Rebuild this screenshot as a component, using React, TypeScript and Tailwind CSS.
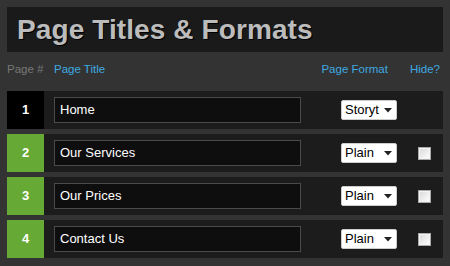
import React from 'react';

const rows = [
  { n: 1, title: 'Home', format: 'Storyt', hide: false, active: true },
  { n: 2, title: 'Our Services', format: 'Plain', hide: true, active: false },
  { n: 3, title: 'Our Prices', format: 'Plain', hide: true, active: false },
  { n: 4, title: 'Contact Us', format: 'Plain', hide: true, active: false },
];

const App = () => {
  return (
    <div
      className="w-[450px] h-[266px] bg-[#333333] px-[7px] pt-[7px] overflow-hidden"
      style={{ fontFamily: '"Liberation Sans", Arial, sans-serif' }}
    >
      {/* Title bar */}
      <div className="h-[45px] bg-[#1a1a1a] flex items-center pl-[10px]">
        <h1 className="text-[28px] font-bold text-[#bcbcbc] leading-none tracking-[0.1px] [text-shadow:1px_1px_0_#000]">
          Page Titles &amp; Formats
        </h1>
      </div>

      {/* Column headers */}
      <div className="h-[36px] flex items-center text-[11.5px]">
        <span className="w-[47px] text-[#777777]">Page #</span>
        <span className="text-[#3ea9e0]">Page Title</span>
        <span className="ml-auto text-[#3ea9e0]">Page Format</span>
        <span className="ml-[22px] mr-[3px] text-[#3ea9e0]">Hide?</span>
      </div>

      {/* Rows */}
      <div className="mt-[3px] flex flex-col gap-[5px]">
        {rows.map((r) => (
          <div key={r.n} className="h-[38px] bg-[#1c1c1c] flex items-center">
            <div
              className={`w-[37px] h-full flex items-center justify-center text-[13px] font-bold text-white ${
                r.active ? 'bg-black' : 'bg-[#67a935]'
              }`}
            >
              {r.n}
            </div>
            <div className="ml-[10px] w-[247px] h-[26px] bg-[#0e0e0e] border border-[#4a4a4a] flex items-center pl-[5px] text-[13px] text-white">
              {r.title}
            </div>
            <div className="ml-[40px] w-[56px] h-[20px] bg-white border border-[#cccccc] rounded-[2px] flex items-center pl-[3px] pr-[4px] text-[13px] text-black">
              <span className="flex-1 overflow-hidden whitespace-nowrap">{r.format}</span>
              <svg width="8" height="5" viewBox="0 0 8 5">
                <path d="M0 0 L8 0 L4 4.5 Z" fill="#222" />
              </svg>
            </div>
            {r.hide && (
              <div className="ml-[21px] w-[13px] h-[13px] border border-[#aaaaaa] bg-gradient-to-br from-[#d8d8d8] to-[#ffffff] shadow-[inset_0_0_0_1px_#f4f4f4]" />
            )}
          </div>
        ))}
      </div>
    </div>
  );
};

export default App;
